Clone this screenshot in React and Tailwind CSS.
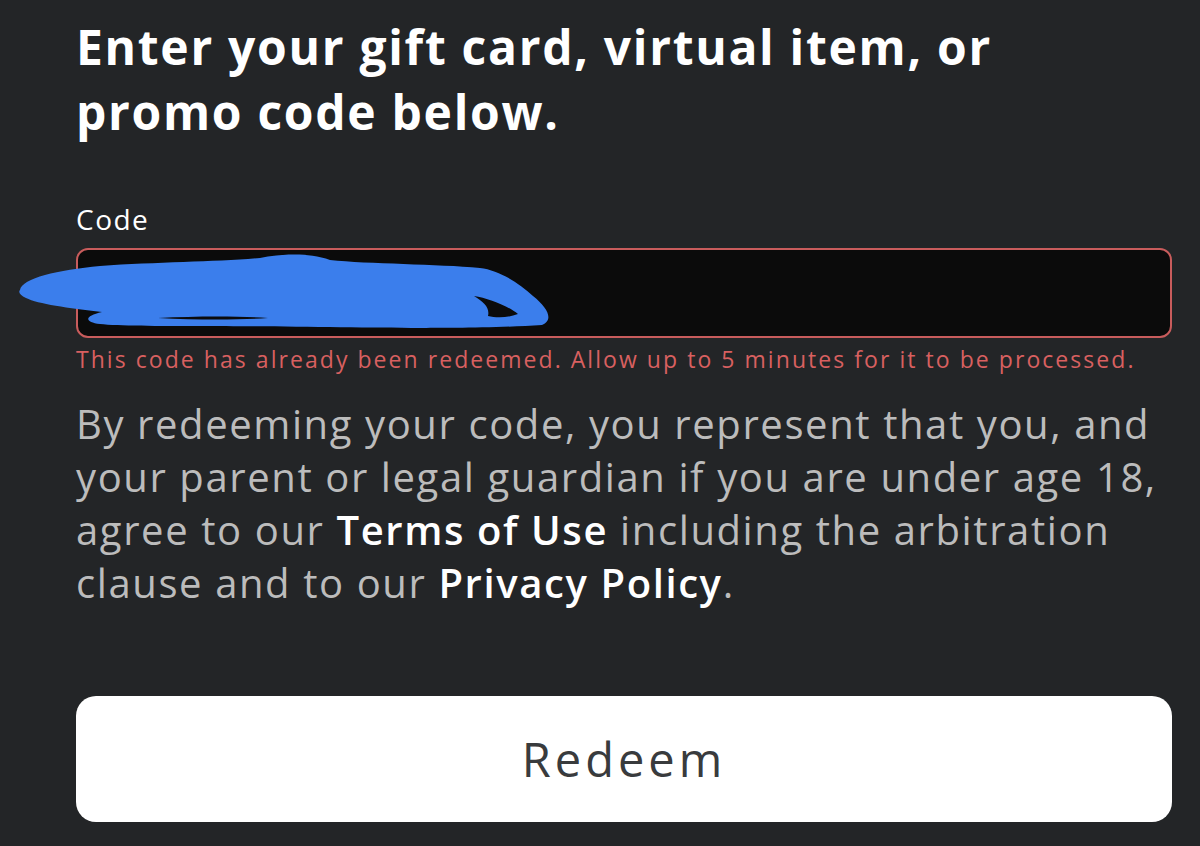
export default function App() {
  return (
    <div className="min-h-[846px] w-full bg-[#232527] overflow-hidden" style={{ fontFamily: "'Open Sans', 'Noto Sans', sans-serif" }}>
      <div className="pl-[76px] pr-[28px] pt-[14px]">
        <h1 className="text-[48px] leading-[65px] font-bold text-white tracking-[1.7px] whitespace-nowrap">
          Enter your gift card, virtual item, or
          <br />
          promo code below.
        </h1>

        <label className="block mt-[58px] text-[28px] leading-[34px] text-white tracking-[1.5px]">Code</label>

        <div className="relative mt-[12px]">
          <div className="h-[90px] rounded-[12px] border-2 border-[#c85c5c] bg-[#0b0b0b]"></div>
          {/* blue scribble hiding the entered code */}
          <svg className="absolute left-[-58px] top-0" width="540" height="84" viewBox="0 0 540 84" fill="#3b7eec">
            <path d="M2 42 C4 30 40 22 82 18 C140 14 200 14 242 10 C262 6 290 4 312 12 C350 16 420 16 462 20 C480 22 500 34 515 48 C530 60 536 72 524 77 C480 80 420 80 402 80 C340 80 240 78 182 78 C140 78 100 78 82 76 C66 74 66 68 84 64 C50 60 20 56 8 50 C2 47 0 44 2 42 Z" />
            <path d="M456 48 C470 50 490 58 500 66 C490 70 478 70 470 68 C472 60 466 54 456 48 Z" fill="#0b0b0b" />
            <path d="M140 70 C180 68 220 68 250 70 C220 72 180 72 140 70 Z" fill="#0b0b0b" />
          </svg>
        </div>

        <p className="mt-[7px] text-[23px] leading-[28px] text-[#d86060] tracking-[2.05px] whitespace-nowrap">
          This code has already been redeemed. Allow up to 5 minutes for it to be processed.
        </p>

        <p className="mt-[24px] text-[40px] leading-[53px] text-[#bcbcbc] tracking-[1.6px] whitespace-nowrap">
          By redeeming your code, you represent that you, and
          <br />
          your parent or legal guardian if you are under age 18,
          <br />
          agree to our <span className="font-semibold text-white">Terms of Use</span> including the arbitration
          <br />
          clause and to our <span className="font-semibold text-white">Privacy Policy</span>.
        </p>

        <button className="mt-[87px] w-full h-[126px] rounded-[20px] bg-white text-[47px] font-medium text-[#393b3d] tracking-[4px]">
          Redeem
        </button>
      </div>
    </div>
  );
}
